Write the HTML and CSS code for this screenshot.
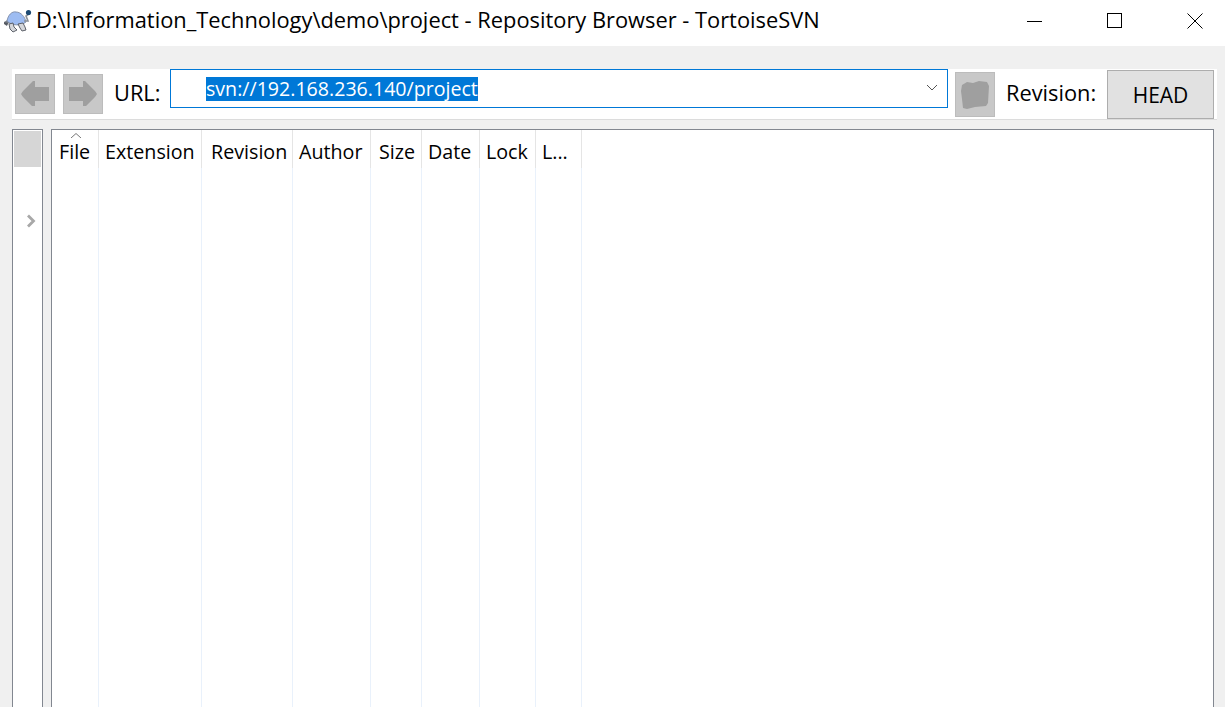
FILE: index.html
```html
<!DOCTYPE html>
<html lang="en">
<head>
<meta charset="utf-8">
<title>Repository Browser</title>
<link rel="stylesheet" href="styles.css">
</head>
<body>
<div class="titlebar">
  <svg class="app-icon" width="28" height="24" viewBox="0 0 28 24">
    <path d="M0 13 L5 10 L6 13 L3 16Z" fill="#7c8088"/>
    <path d="M0 13 L4 14 L3 17 L0 15Z" fill="#555a63"/>
    <path d="M3 12 C4 6 8 2 12 3 C17 3 21 8 22 13 C17 17 8 17 3 12Z" fill="#9dbcf2" stroke="#7f8ca6" stroke-width="0.9"/>
    <path d="M5 15 L9 14 L10 18 L13 21 L9 23 L6 20Z" fill="#d4d6da" stroke="#4f545c" stroke-width="0.9"/>
    <path d="M14 15 L19 14 L21 18 L22 21 L18 22 L16 19Z" fill="#d4d6da" stroke="#4f545c" stroke-width="0.9"/>
    <path d="M20 12 L24 12 L22 7 L25 5" stroke="#8b9097" stroke-width="1.6" fill="none"/>
    <circle cx="24.5" cy="3.5" r="2.6" fill="#1d4a73"/>
  </svg>
  <span class="title">D:\Information_Technology\demo\project - Repository Browser - TortoiseSVN</span>
  <div class="win-buttons">
    <svg class="win-btn" width="16" height="16" viewBox="0 0 16 16"><path d="M0 8.5H15" stroke="#000" fill="none"/></svg>
    <svg class="win-btn" width="16" height="16" viewBox="0 0 16 16"><rect x="0.5" y="0.5" width="14" height="14" stroke="#000" fill="none"/></svg>
    <svg class="win-btn" width="16" height="16" viewBox="0 0 16 16"><path d="M0.5 0.5L15.5 15.5M15.5 0.5L0.5 15.5" stroke="#000" fill="none"/></svg>
  </div>
</div>
<div class="client">
  <div class="toolbar">
    <button class="tool-btn">
      <svg width="28" height="26" viewBox="0 0 28 26"><path d="M0 13 L2 10 L9 3 L12 0 L14 0 L14 6 L28 6 L28 20 L14 20 L14 25 L11 25 L2 16Z" fill="#9f9f9f"/></svg>
    </button>
    <button class="tool-btn">
      <svg width="28" height="26" viewBox="0 0 28 26"><path d="M28 13 L26 10 L19 3 L16 0 L14 0 L14 6 L0 6 L0 20 L14 20 L14 25 L17 25 L26 16Z" fill="#9f9f9f"/></svg>
    </button>
    <span class="label url-label">URL:</span>
    <div class="combo">
      <span class="selected">svn://192.168.236.140/project</span>
      <svg class="chevron" width="12" height="7" viewBox="0 0 12 7"><path d="M1 1L6 6L11 1" stroke="#555" fill="none"/></svg>
    </div>
    <button class="tool-btn stop-btn">
      <svg width="28" height="28" viewBox="0 0 28 28"><path d="M1 4 L6 1 L12 2 L18 0 L26 1 L28 5 L27 22 L25 25 L14 26 L6 28 L2 27 L1 18 L0 10Z" fill="#9f9f9f"/></svg>
    </button>
    <span class="label rev-label">Revision:</span>
    <button class="head-btn">HEAD</button>
  </div>
  <div class="panes">
    <div class="tree">
      <div class="tree-top"></div>
      <svg class="tree-arrow" width="10" height="14" viewBox="0 0 10 14"><path d="M2 1.5L7.5 7L2 12.5" stroke="#a8a8a8" stroke-width="2.8" fill="none"/></svg>
    </div>
    <div class="list">
      <div class="col col-file"><div class="head"><svg class="sort" width="12" height="5" viewBox="0 0 12 5"><path d="M1 5L6 0.5L11 5" stroke="#777" fill="none"/></svg>File</div></div>
      <div class="col col-ext"><div class="head">Extension</div></div>
      <div class="col col-rev"><div class="head">Revision</div></div>
      <div class="col col-author"><div class="head">Author</div></div>
      <div class="col col-size"><div class="head">Size</div></div>
      <div class="col col-date"><div class="head">Date</div></div>
      <div class="col col-lock"><div class="head">Lock</div></div>
      <div class="col col-l"><div class="head">L...</div></div>
    </div>
  </div>
</div>
</body>
</html>
```
FILE: styles.css
```css
* { box-sizing: border-box; }
html, body { margin: 0; height: 100%; overflow: hidden; }
body {
  width: 1225px;
  height: 707px;
  background: #f0f0f0;
  font-family: "Open Sans", "Noto Sans", "Liberation Sans", sans-serif;
  color: #000;
  display: flex;
  flex-direction: column;
}
.titlebar {
  height: 46px;
  flex: none;
  background: #fff;
  display: flex;
  align-items: center;
  padding: 0 0 5px 4px;
}
.app-icon { flex: none; margin-right: 4px; }
.title { font-size: 21.85px; line-height: 30px; margin-top: -1px; white-space: nowrap; }
.win-buttons {
  margin-left: auto;
  display: flex;
  gap: 64px;
  padding-right: 22px;
  margin-top: 1px;
}
.win-btn { display: block; }
.client {
  flex: 1;
  padding: 23px 8px 0 12px;
  display: flex;
  flex-direction: column;
  min-height: 0;
}
.toolbar {
  height: 51px;
  flex: none;
  background: #fff;
  border-bottom: 1px solid #dcdcdc;
  display: flex;
  align-items: flex-start;
  padding-left: 3px;
}
.tool-btn {
  width: 40px;
  height: 40px;
  margin-top: 5px;
  margin-right: 8px;
  padding: 0;
  background: #c8c8c8;
  border: 1px solid #bcbcbc;
  display: flex;
  align-items: center;
  justify-content: center;
}
.label { font-size: 21.8px; line-height: 26px; margin-top: 11px; }
.url-label { margin-left: 3px; width: 56px; flex: none; }
.combo {
  width: 778px;
  height: 39px;
  flex: none;
  background: #fff;
  border: 1px solid #0078d7;
  display: flex;
  align-items: center;
  padding-left: 35px;
}
.selected {
  background: #0078d7;
  color: #fff;
  font-size: 19.6px;
  line-height: 24px;
  white-space: nowrap;
}
.chevron { margin-left: auto; margin-right: 9px; margin-top: -2px; }
.stop-btn { height: 45px; margin-left: 7px; margin-top: 3px; margin-right: 11px; }
.rev-label { width: 101px; flex: none; margin-top: 11px; }
.head-btn {
  width: 107px;
  height: 49px;
  flex: none;
  margin-top: 1px;
  background: #e1e1e1;
  border: 1px solid #adadad;
  font: inherit;
  font-size: 21px;
  padding: 0;
  color: #000;
}
.panes {
  flex: 1;
  min-height: 0;
  display: flex;
  gap: 8px;
  margin-top: 9px;
}
.tree {
  width: 31px;
  flex: none;
  background: #fff;
  border: 1px solid #828790;
  border-bottom: 0;
  padding: 1px;
  display: flex;
  flex-direction: column;
  align-items: center;
}
.tree-top { width: 27px; height: 36px; flex: none; background: #d6d6d6; }
.tree-arrow { margin-top: 47px; margin-left: 6px; }
.list {
  width: 1163px;
  flex: none;
  background: #fff;
  border: 1px solid #828790;
  border-bottom: 0;
  display: flex;
}
.col {
  flex: none;
  border-right: 1px solid #e9f1fb;
}
.head {
  position: relative;
  height: 38px;
  margin-right: -1px;
  border-right: 1px solid #e5e5e5;
  font-size: 19.7px;
  line-height: 44px;
  white-space: nowrap;
  padding-left: 6px;
}
.col-file .head { padding-left: 7px; }
.sort { position: absolute; left: 18px; top: 3px; }
.col-file { width: 47px; }
.col-ext { width: 103px; }
.col-rev { width: 91px; padding-left: 3px; }
.col-author { width: 78px; }
.col-size { width: 51px; padding-left: 2px; }
.col-date { width: 58px; }
.col-lock { width: 56px; }
.col-l { width: 46px; }
```
